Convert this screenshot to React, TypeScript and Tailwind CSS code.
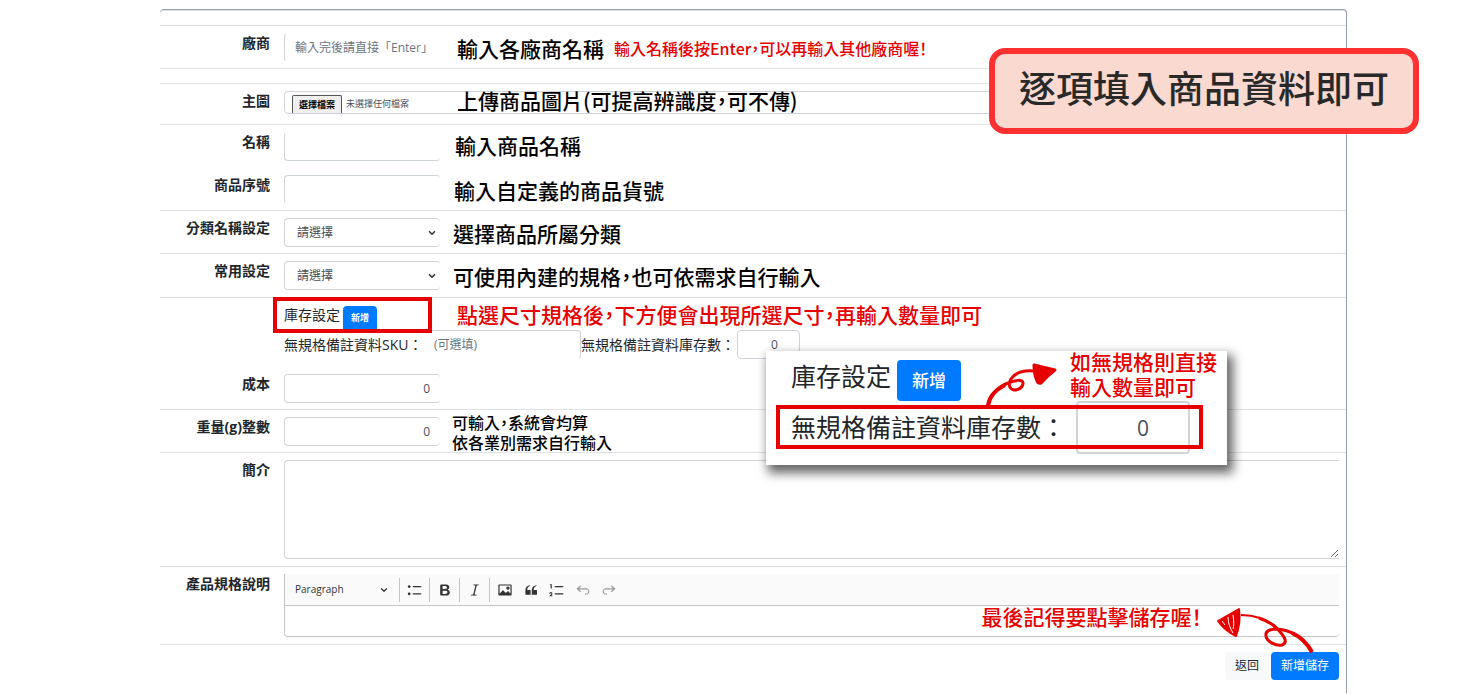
import type { ReactNode } from "react";
import { ChevronDown } from "lucide-react";

const controlBase =
  "h-[29px] w-[156px] shrink-0 rounded border border-r-0 border-[#ced4da] bg-white text-xs text-[#495057] outline-none";

const icons = {
  bulleted:
    "M7 5.75c0 .414.336.75.75.75h9.5a.75.75 0 1 0 0-1.5h-9.5a.75.75 0 0 0-.75.75zm-6 0C1 4.784 1.777 4 2.75 4c.966 0 1.75.777 1.75 1.75 0 .966-.777 1.75-1.75 1.75C1.784 7.5 1 6.723 1 5.75zm6 9c0 .414.336.75.75.75h9.5a.75.75 0 1 0 0-1.5h-9.5a.75.75 0 0 0-.75.75zm-6 0c0-.966.777-1.75 1.75-1.75.966 0 1.75.777 1.75 1.75 0 .966-.777 1.75-1.75 1.75-.966 0-1.75-.777-1.75-1.75z",
  bold:
    "M10.187 17H5.773c-.637 0-1.092-.138-1.364-.415-.273-.277-.409-.718-.409-1.323V4.738c0-.617.14-1.062.419-1.332.279-.27.73-.406 1.354-.406h4.68c.69 0 1.288.041 1.793.124.506.083.96.242 1.36.478.341.197.644.447.906.75a3.262 3.262 0 0 1 .808 2.162c0 1.401-.722 2.426-2.167 3.075C15.05 10.175 16 11.315 16 13.01a3.756 3.756 0 0 1-2.296 3.504 6.1 6.1 0 0 1-1.517.377c-.571.073-1.238.11-2 .11zm-.217-6.217H7v4.087h3.069c1.977 0 2.965-.69 2.965-2.072 0-.707-.256-1.22-.768-1.537-.512-.319-1.277-.478-2.296-.478zM7 5.13v3.619h2.606c.729 0 1.292-.067 1.69-.2a1.6 1.6 0 0 0 .91-.765c.165-.267.247-.566.247-.897 0-.707-.26-1.176-.778-1.409-.519-.232-1.31-.348-2.375-.348H7z",
  italic:
    "m9.586 14.633.021.004c-.036.335.095.655.393.962.082.083.173.15.274.201h1.474a.6.6 0 1 1 0 1.2H5.304a.6.6 0 0 1 0-1.2h1.15c.474-.07.809-.182 1.005-.334.157-.122.291-.32.404-.597l2.416-9.55a1.053 1.053 0 0 0-.281-.823 1.12 1.12 0 0 0-.442-.296H8.15a.6.6 0 0 1 0-1.2h6.443a.6.6 0 1 1 0 1.2h-1.195c-.376.056-.65.155-.823.296-.215.175-.423.439-.623.79l-2.366 9.347z",
  image:
    "M6.91 10.54c.26-.23.64-.21.88.03l3.36 3.14 2.23-2.06a.64.64 0 0 1 .87 0l2.52 2.97V4.5H3.2v10.12l3.71-4.08zm10.27-7.51c.6 0 1.09.47 1.09 1.05v11.84c0 .59-.49 1.06-1.09 1.06H2.79c-.6 0-1.09-.47-1.09-1.06V4.08c0-.58.49-1.05 1.1-1.05h14.38zm-5.22 5.56a1.96 1.96 0 1 1 3.4-1.96 1.96 1.96 0 0 1-3.4 1.96z",
  quote:
    "M3 10.423a6.5 6.5 0 0 1 6.056-6.408l.038.67C6.448 5.423 5.354 7.663 5.22 10H9c.552 0 .5.432.5.986v4.511c0 .554-.448.503-1 .503h-5c-.552 0-.5-.449-.5-1.003v-4.574zm8 0a6.5 6.5 0 0 1 6.056-6.408l.038.67c-2.646.739-3.74 2.979-3.873 5.315H17c.552 0 .5.432.5.986v4.511c0 .554-.448.503-1 .503h-5c-.552 0-.5-.449-.5-1.003v-4.574z",
  numbered:
    "M7 5.75c0 .414.336.75.75.75h9.5a.75.75 0 1 0 0-1.5h-9.5a.75.75 0 0 0-.75.75zM3.5 3v5H2V3.7H1v-1h2.5V3zM.343 17.857l2.59-3.257H2.92a.6.6 0 1 0-1.04 0H.302a2 2 0 1 1 3.995 0h-.001c-.048.405-.16.734-.333.988-.175.254-.59.692-1.244 1.312H4.3v1h-4l.043-.043zM7 14.75a.75.75 0 0 1 .75-.75h9.5a.75.75 0 1 1 0 1.5h-9.5a.75.75 0 0 1-.75-.75z",
  undo:
    "m5.042 9.367 2.189 1.837a.75.75 0 0 1-.965 1.149l-3.788-3.18a.747.747 0 0 1-.21-.284.75.75 0 0 1 .17-.945L6.23 4.762a.75.75 0 1 1 .964 1.15L4.863 7.866h8.917A.75.75 0 0 1 14 7.9a4 4 0 1 1-1.477 7.718l.344-1.489a2.5 2.5 0 1 0 1.094-4.73l.008-.032H5.042z",
  redo:
    "m14.958 9.367-2.189 1.837a.75.75 0 0 0 .965 1.149l3.788-3.18a.747.747 0 0 0 .21-.284.75.75 0 0 0-.17-.945L13.77 4.762a.75.75 0 1 0-.964 1.15l2.331 1.955H6.22A.75.75 0 0 0 6 7.9a4 4 0 1 0 1.477 7.718l-.344-1.489A2.5 2.5 0 1 1 6.039 9.4l-.008-.032h8.927z",
};

type RowProps = {
  label?: string;
  htmlFor?: string;
  className?: string;
  children: ReactNode;
};

function Row({ label, htmlFor, className = "", children }: RowProps) {
  return (
    <div className={`flex gap-3.5 border-t pr-[7px] pt-[7px] ${className}`}>
      <div className="w-[110px] shrink-0 text-right">
        {label && (
          <label htmlFor={htmlFor} className="block text-sm leading-5 font-bold">
            {label}
          </label>
        )}
      </div>
      <div className="min-w-0 flex-1">{children}</div>
    </div>
  );
}

function Note({ children, red = false }: { children: ReactNode; red?: boolean }) {
  return (
    <span
      className={`block font-['Noto_Sans_CJK_TC',sans-serif] text-[21px] leading-[26px] font-medium whitespace-nowrap [font-feature-settings:'palt'] ${
        red ? "text-[#e60000]" : "text-black"
      }`}
    >
      {children}
    </span>
  );
}

function SelectBox({ id }: { id: string }) {
  return (
    <div className="relative w-[156px] shrink-0">
      <select id={id} className={`${controlBase} appearance-none pl-3`}>
        <option>請選擇</option>
      </select>
      <ChevronDown className="pointer-events-none absolute top-2.5 right-[3px] size-2.5 text-[#343a40]" strokeWidth={4} />
    </div>
  );
}

type ToolProps = {
  name: keyof typeof icons;
  label: string;
  disabled?: boolean;
};

function Tool({ name, label, disabled = false }: ToolProps) {
  return (
    <button
      type="button"
      aria-label={label}
      disabled={disabled}
      className="flex w-[26px] justify-center text-[#333] disabled:text-[#999]"
    >
      <svg viewBox="0 0 20 20" className="size-4" fill="currentColor">
        <path d={icons[name]} />
      </svg>
    </button>
  );
}

function Separator() {
  return <span className="h-6 w-px bg-[#c4c4c4]" />;
}

function Toolbar() {
  return (
    <div className="flex h-8 items-center border-b border-[#c4c4c4] bg-[#fafafa]">
      <button type="button" className="flex w-[114px] items-center justify-between pr-2.5 pl-2.5 text-[10px] text-[#333]">
        Paragraph
        <ChevronDown className="size-2.5" strokeWidth={3} />
      </button>
      <Separator />
      <div className="flex w-[29px] justify-center"><Tool name="bulleted" label="Bulleted List" /></div>
      <Separator />
      <div className="flex w-[29px] justify-center"><Tool name="bold" label="Bold" /></div>
      <Separator />
      <div className="flex w-[29px] justify-center"><Tool name="italic" label="Italic" /></div>
      <Separator />
      <div className="flex pl-0.5">
        <Tool name="image" label="Insert image" />
        <Tool name="quote" label="Block quote" />
        <Tool name="numbered" label="Numbered List" />
        <Tool name="undo" label="Undo" disabled />
        <Tool name="redo" label="Redo" disabled />
      </div>
    </div>
  );
}

// Enlarged view of the stock setting
function StockCallout() {
  return (
    <div className="absolute top-[341px] left-[606px] h-[114px] w-[461px] bg-white px-[25px] pt-[9px] text-[25px] shadow-[4px_6px_10px_2px_rgba(0,0,0,0.6)]">
      <div className="flex h-[41px] gap-1.5">
        <span className="leading-8 whitespace-nowrap">庫存設定</span>
        <button type="button" className="w-16 rounded bg-[#007bff] text-[17px] font-medium text-white">
          新增
        </button>
      </div>
      <div className="flex h-[53px] items-center">
        <label htmlFor="callout-qty" className="w-[285px] whitespace-nowrap">無規格備註資料庫存數：</label>
        <input
          id="callout-qty"
          defaultValue="0"
          className="h-[53px] w-[114px] rounded border-2 border-[#ced4da] pl-5 text-center text-[21px] text-[#495057]"
        />
      </div>
      <div className="pointer-events-none absolute top-[54px] left-[10px] h-11 w-[427px] border-4 border-[#e60000]" />
      <p className="absolute -top-0.5 left-[304px] font-['Noto_Sans_CJK_TC',sans-serif] text-[21px] leading-[25px] font-medium whitespace-nowrap text-[#e60000]">
        如無規格則直接
        <br />
        輸入數量即可
      </p>
      <svg viewBox="0 0 76 48" className="absolute top-[9px] left-[218px] h-12 w-[76px]" fill="none">
        <path
          d="M4 46C5 36 14 27 24 23C31 20 39 19 39 23C39 28 34 30 30 30C25 29 24 24 27 19C31 13 39 10 50 11"
          stroke="#e60000"
          strokeWidth="3"
          strokeLinecap="round"
        />
        <path d="M4 46C5 37 11 30 21 25" stroke="#e60000" strokeWidth="4" />
        <path
          d="M50 5L71 10Q63 16 57 23Q54 24 53 21Q50 14 50 5Z"
          fill="#e60000"
          stroke="#e60000"
          strokeWidth="3"
          strokeLinejoin="round"
        />
      </svg>
    </div>
  );
}

export default function App() {
  return (
    <main
      lang="zh-TW"
      className="min-h-screen bg-white pt-[9px] font-['Open_Sans','Noto_Sans_CJK_TC',sans-serif] text-[#212529]"
    >
      <form className="relative mr-[129px] ml-40 min-h-[684px] rounded-t border-t border-r border-[#989db0] pt-[15px] shadow-[inset_0_1px_0_#dcdfe8]">
        <Row label="廠商" htmlFor="vendor" className="h-11 border-b border-[#dee2e6]">
          <div className="flex items-center gap-[17px]">
            <input
              id="vendor"
              placeholder="輸入完後請直接「Enter」"
              className={`${controlBase} border-y-transparent pl-2.5 placeholder:text-[#6c757d]`}
            />
            <div className="flex items-center gap-2.5">
              <Note>輸入各廠商名稱</Note>
              <span className="font-['Noto_Sans_CJK_TC',sans-serif] text-base leading-5 font-medium whitespace-nowrap text-[#e60000] [font-feature-settings:'palt']">
                輸入名稱後按Enter，可以再輸入其他廠商喔！
              </span>
            </div>
          </div>
        </Row>

        <Row label="主圖" htmlFor="photo" className="mt-3.5 h-[41px] border-[#dee2e6]">
          <div className="flex h-[23px] items-end rounded border border-[#ced4da] pl-[7px]">
            <div className="flex w-[165px] items-end gap-1">
              <label htmlFor="photo" className="flex h-[18px] items-center rounded-t-xs border border-b-0 border-[#555] bg-[#efefef] px-1.5 text-[9px] font-bold text-black">
                選擇檔案
              </label>
              <input id="photo" type="file" className="sr-only" />
              <span className="text-[9px] leading-[18px] text-[#495057]">未選擇任何檔案</span>
            </div>
            <Note>上傳商品圖片(可提高辨識度，可不傳)</Note>
          </div>
        </Row>

        <Row label="名稱" htmlFor="title" className="h-[43px] border-[#dee2e6]">
          <div className="flex gap-[15px]">
            <input id="title" className={`${controlBase} border-t-transparent px-2.5`} />
            <Note>輸入商品名稱</Note>
          </div>
        </Row>

        <Row label="商品序號" htmlFor="serial" className="h-[43px] border-transparent">
          <div className="flex items-center gap-3.5">
            <input id="serial" className={`${controlBase} border-b-transparent px-2.5`} />
            <Note>輸入自定義的商品貨號</Note>
          </div>
        </Row>

        <Row label="分類名稱設定" htmlFor="category" className="h-[43px] border-[#dee2e6]">
          <div className="flex items-center gap-[13px]">
            <SelectBox id="category" />
            <Note>選擇商品所屬分類</Note>
          </div>
        </Row>

        <Row label="常用設定" htmlFor="preset" className="h-11 border-[#dee2e6]">
          <div className="flex items-center gap-[13px]">
            <SelectBox id="preset" />
            <Note>可使用內建的規格，也可依需求自行輸入</Note>
          </div>
        </Row>

        <Row className="h-[69px] border-[#dee2e6]">
          <div className="relative flex h-[25px] items-start">
            <span className="text-sm leading-5">庫存設定</span>
            <button type="button" className="mt-px ml-[3px] h-6 w-[34px] rounded-t bg-[#007bff] text-[9px] font-bold text-white">
              新增
            </button>
            <div className="-mt-1 ml-20"><Note red>點選尺寸規格後，下方便會出現所選尺寸，再輸入數量即可</Note></div>
            <div className="pointer-events-none absolute -top-2 -left-[11px] h-9 w-[159px] border-4 border-[#e60000]" />
          </div>
          <div className="flex items-center text-sm">
            <label htmlFor="sku" className="w-[141px] whitespace-nowrap">無規格備註資料SKU：</label>
            <input
              id="sku"
              placeholder="(可選填)"
              className="h-[29px] w-[156px] rounded border border-b-transparent border-l-transparent border-[#ced4da] pl-2 text-xs placeholder:text-[#6c757d]"
            />
            <label htmlFor="qty" className="w-[156px] whitespace-nowrap">無規格備註資料庫存數：</label>
            <input
              id="qty"
              defaultValue="0"
              className="h-[29px] w-[63px] rounded border border-[#ced4da] pl-3 text-center text-xs text-[#495057]"
            />
          </div>
        </Row>

        <Row label="成本" htmlFor="cost" className="h-[43px] border-transparent">
          <input id="cost" defaultValue="0" className={`${controlBase} pr-2.5 text-right`} />
        </Row>

        <Row label="重量(g)整數" htmlFor="weight" className="h-[43px] border-[#dee2e6]">
          <div className="flex h-[29px] items-center gap-3">
            <input id="weight" defaultValue="0" className={`${controlBase} pr-2.5 text-right`} />
            <p className="font-['Noto_Sans_CJK_TC',sans-serif] text-base leading-5 font-medium whitespace-nowrap text-black [font-feature-settings:'palt']">
              可輸入，系統會均算
              <br />
              依各業別需求自行輸入
            </p>
          </div>
        </Row>

        <Row label="簡介" htmlFor="intro" className="h-[114px] border-[#dee2e6]">
          <textarea id="intro" className="block h-[99px] w-full rounded-l border border-r-0 border-[#ced4da] p-2 text-xs outline-none" />
        </Row>

        <Row label="產品規格說明" htmlFor="spec" className="h-[79px] border-b border-[#dee2e6]">
          <div className="rounded-b border border-t-0 border-r-0 border-[#c4c4c4]">
            <Toolbar />
            <textarea id="spec" className="block h-[30px] w-full resize-none px-2 text-xs outline-none" />
          </div>
        </Row>

        <div className="relative flex justify-end gap-0.5 pt-[7px] pr-[7px] text-xs">
          <button type="button" className="h-7 rounded bg-[#f8f9fa] px-2.5">返回</button>
          <button type="submit" className="h-7 rounded bg-[#007bff] px-2.5 text-white">新增儲存</button>

          <div className="pointer-events-none absolute right-36 bottom-[51px]">
            <Note red>最後記得要點擊儲存喔！</Note>
          </div>
          <svg viewBox="0 0 98 48" className="pointer-events-none absolute right-8 bottom-[27px] h-12 w-[98px]" fill="none">
            <path d="M25 10C32 10 38 11 44 13" stroke="#e60000" strokeWidth="2" />
            <path
              d="M43 13C52 16 61 22 65 28C70 34 71 38 66 40C60 41 51 37 50 31C49 26 54 24 61 24C76 25 88 34 96 47"
              stroke="#e60000"
              strokeWidth="3"
            />
            <path d="M76 28C85 32 91 38 96 47" stroke="#e60000" strokeWidth="4" />
            <path d="M2 16L23 4Q25 18 20 31Q9 26 2 16Z" fill="#e60000" stroke="#e60000" strokeWidth="2" strokeLinejoin="round" />
            <path d="M6 16L9 20M12 12C12 18 14 23 17 28M17 10C18 16 18 21 17 24" stroke="#fff" strokeWidth="1" />
          </svg>
        </div>

        <StockCallout />

        <div className="absolute top-[38px] -right-[73px] h-[86px] rounded-2xl border-[6px] border-[#ff3131] bg-[#f9d9d0] px-6">
          <p className="font-['Noto_Sans_CJK_TC',sans-serif] text-[37px] leading-[66px] font-medium whitespace-nowrap text-[#292929]">
            逐項填入商品資料即可
          </p>
        </div>
      </form>
    </main>
  );
}
